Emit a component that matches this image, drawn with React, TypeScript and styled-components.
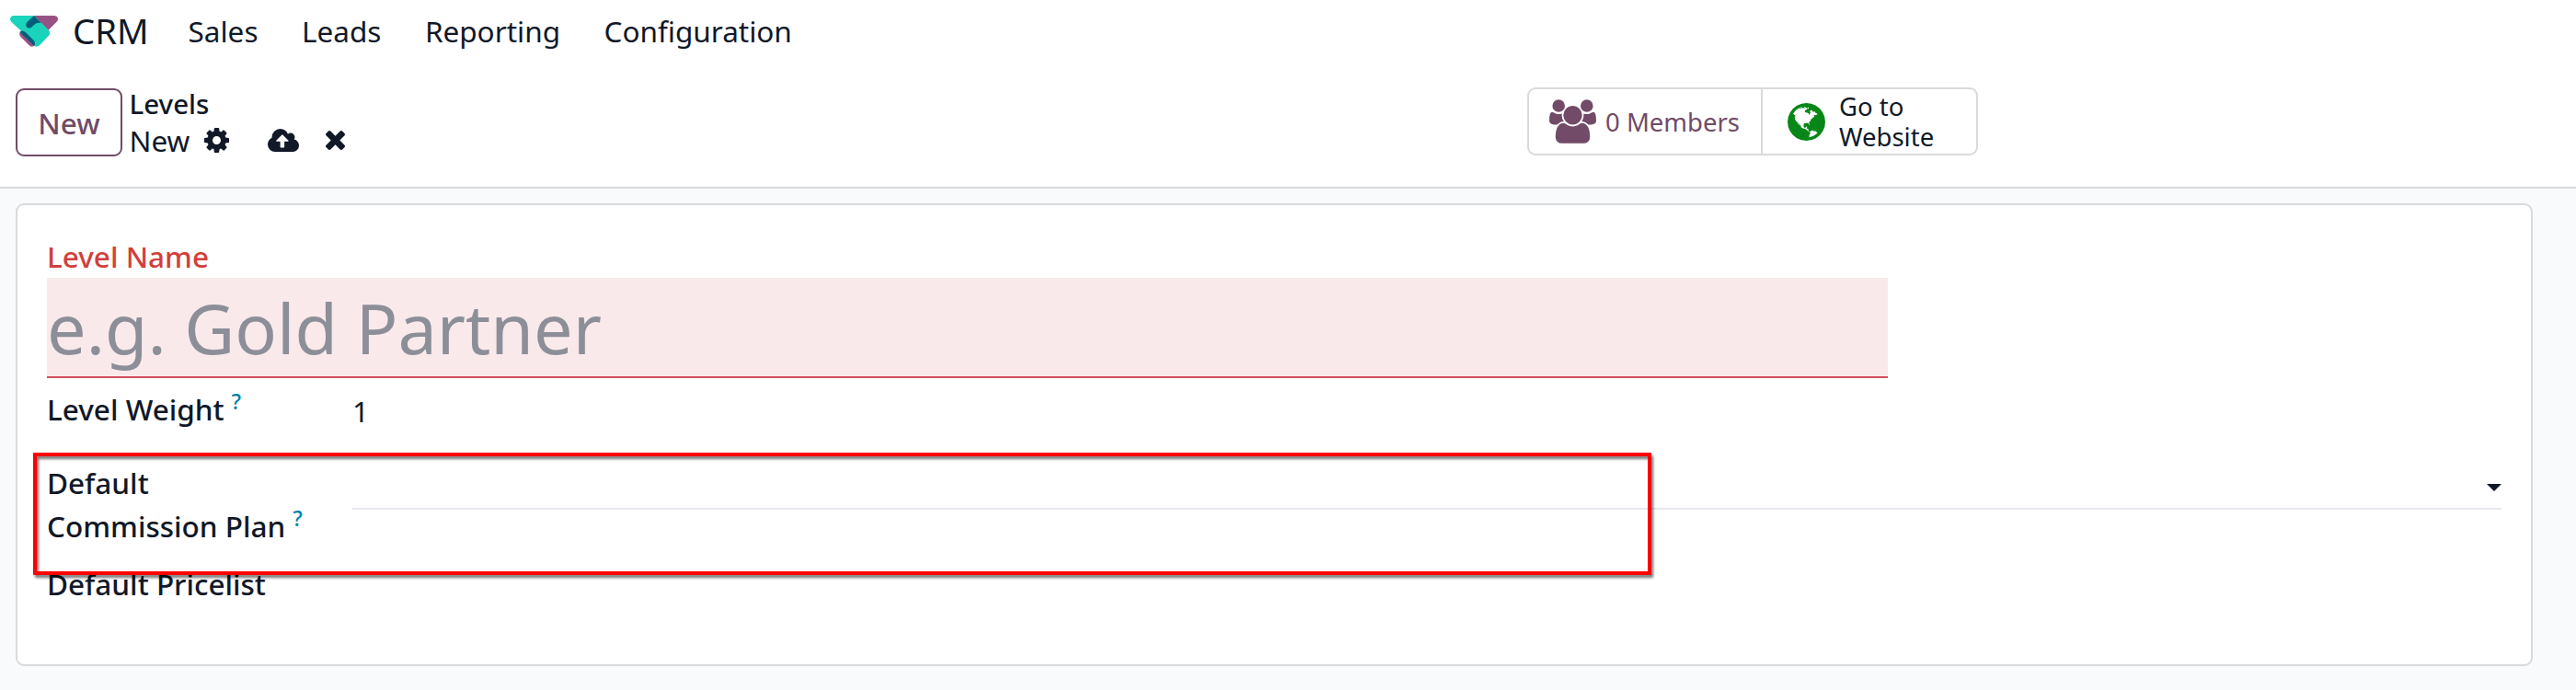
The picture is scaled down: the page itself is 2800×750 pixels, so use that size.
import React from "react";
import styled, { createGlobalStyle } from "styled-components";

const ink = "#111827";
const plum = "#714b67";
const line = "#d8dadd";

const GlobalStyle = createGlobalStyle`
  * { box-sizing: border-box; }
  body {
    margin: 0;
    background: #f9fafc;
    color: ${ink};
    font-family: "Noto Sans", "Liberation Sans", sans-serif;
    font-size: 31.5px;
    line-height: 47px;
  }
`;

const Page = styled.div`
  display: flex;
  flex-direction: column;
  height: 750px;
  overflow: hidden;
`;

const Header = styled.header`
  height: 205px;
  background: #fff;
  border-bottom: 2px solid ${line};
`;

const Navbar = styled.nav`
  display: flex;
  align-items: center;
  height: 67px;
  padding-left: 11px;
`;

const Brand = styled.span`
  margin: 0 43px 0 16px;
  font-size: 38.2px;
  white-space: nowrap;
`;

const MenuItem = styled.a`
  margin-right: 47.5px;
  white-space: nowrap;
`;

const ControlPanel = styled.div`
  display: flex;
  align-items: flex-start;
  padding: 28px 0 0 17px;
`;

const NewButton = styled.button`
  width: 116px;
  height: 74px;
  margin-top: 1px;
  padding: 1px 0 0;
  border: 2px solid ${plum};
  border-radius: 9px;
  background: #fff;
  color: ${plum};
  font: inherit;
  font-weight: 500;
`;

const Breadcrumb = styled.div`
  display: flex;
  flex-direction: column;
  width: 1517px;
  margin-top: -2px;
  padding: 0 0 0 7.5px;
  line-height: 39.5px;
`;

const ParentCrumb = styled.a`
  font-weight: 500;
  font-size: 29.5px;
`;

const CurrentCrumb = styled.div`
  display: flex;
  align-items: center;
  font-size: 31.5px;
`;

const Icon = styled.svg<{ $w: number; $h: number; $ml?: number; $color?: string }>`
  flex: none;
  width: ${(p) => p.$w}px;
  height: ${(p) => p.$h}px;
  margin-left: ${(p) => p.$ml ?? 0}px;
  fill: ${(p) => p.$color ?? ink};
`;

const StatGroup = styled.div`
  display: flex;
  width: 490px;
  height: 74px;
  margin-left: 10px;
  border: 2px solid ${line};
  border-radius: 9px;
  font-size: 27.5px;
  line-height: 33px;
`;

const StatButton = styled.div<{ $width?: number; $pad: number; $color: string }>`
  display: flex;
  align-items: center;
  width: ${(p) => (p.$width ? `${p.$width}px` : "auto")};
  padding-left: ${(p) => p.$pad}px;
  color: ${(p) => p.$color};
  & + & { border-left: 2px solid ${line}; }
`;

const StatText = styled.span<{ $ml: number }>`
  margin-left: ${(p) => p.$ml}px;
  white-space: nowrap;
`;

const Sheet = styled.main`
  position: relative;
  width: 2736px;
  height: 503px;
  margin: 16px 0 0 17px;
  padding: 32px 32px 0;
  border: 2px solid ${line};
  border-radius: 9px;
  background: #fff;
`;

const Label = styled.label<{ $invalid?: boolean }>`
  display: block;
  font-weight: 500;
  white-space: nowrap;
  color: ${(p) => (p.$invalid ? "#d23f3a" : ink)};
`;

const NameInput = styled.input`
  display: block;
  width: 2001px;
  height: 109px;
  padding: 0;
  border: 0;
  border-bottom: 2px solid #d44c59;
  background: #fae9eb;
  font: inherit;
  font-size: 75.6px;
  &::placeholder { color: #8c8f98; opacity: 1; }
`;

const FieldRow = styled.div<{ $top: number; $height: number }>`
  display: grid;
  grid-template-columns: 332px 1fr;
  height: ${(p) => p.$height}px;
  margin-top: ${(p) => p.$top}px;
`;

const Help = styled.sup`
  margin-left: 8px;
  color: #0180a5;
  font-size: 23.5px;
  font-weight: 500;
  line-height: 0;
  vertical-align: 12px;
`;

const Value = styled.span`
  padding-top: 2px;
`;

const SelectField = styled.div`
  display: flex;
  align-items: center;
  justify-content: flex-end;
  height: 51px;
  margin-top: 2px;
  padding-top: 5px;
  border-bottom: 2px solid #e6e7ee;
`;

const Highlight = styled.div`
  position: absolute;
  left: 17px;
  top: 269px;
  width: 1759px;
  height: 133px;
  border: 4px solid #f00;
  border-radius: 1px;
  filter: drop-shadow(2px 3px 1.5px rgba(0, 0, 0, 0.55));
  pointer-events: none;
`;

const paths = {
  cog: "M1152 896q0-106-75-181t-181-75-181 75-75 181 75 181 181 75 181-75 75-181zm512-109v222q0 12-8 23t-20 13l-185 28q-19 54-39 91 35 50 107 138 10 12 10 25t-9 23q-27 37-99 108t-94 71q-12 0-26-9l-138-108q-44 23-91 38-16 136-29 186-7 28-36 28h-222q-14 0-24.5-8.5t-11.5-21.5l-28-184q-49-16-90-37l-141 107q-10 9-25 9-14 0-25-11-126-114-165-168-7-10-7-23 0-12 8-23 15-21 51-66.5t54-70.5q-27-50-41-99l-183-27q-13-2-21-12.5t-8-23.5v-222q0-12 8-23t19-13l186-28q14-46 39-92-40-57-107-138-10-12-10-24 0-10 9-23 26-36 98.5-107.5t94.5-71.5q13 0 26 10l138 107q44-23 91-38 16-136 29-186 7-28 36-28h222q14 0 24.5 8.5t11.5 21.5l28 184q49 16 90 37l142-107q9-9 24-9 13 0 25 10 129 119 165 170 7 8 7 22 0 12-8 23-15 21-51 66.5t-54 70.5q26 50 41 98l183 28q13 2 21 12.5t8 23.5z",
  cloud: "M1216 864q0-14-9-23l-352-352q-9-9-23-9t-23 9l-351 351q-10 12-10 24 0 14 9 23t23 9h224v352q0 13 9.5 22.5t22.5 9.5h192q13 0 22.5-9.5t9.5-22.5v-352h224q13 0 22.5-9.5t9.5-22.5zm640 288q0 159-112.5 271.5t-271.5 112.5h-1088q-185 0-316.5-131.5t-131.5-316.5q0-130 70-240t188-165q-2-30-2-43 0-212 150-362t362-150q156 0 285.5 87t188.5 231q71-62 166-62 106 0 181 75t75 181q0 76-41 138 130 31 213.5 135.5t83.5 238.5z",
  times: "M1490 1322q0 40-28 68l-136 136q-28 28-68 28t-68-28l-294-294-294 294q-28 28-68 28t-68-28l-136-136q-28-28-28-68t28-68l294-294-294-294q-28-28-28-68t28-68l136-136q28-28 68-28t68 28l294 294 294-294q28-28 68-28t68 28l136 136q28 28 28 68t-28 68l-294 294 294 294q28 28 28 68z",
  users: "M529 896q-162 5-265 128h-134q-82 0-138-40.5t-56-118.5q0-353 124-353 6 0 43.5 21t97.5 42.5 119 21.5q67 0 133-23-5 37-5 66 0 139 81 256zm1071 637q0 120-73 189.5t-194 69.5h-874q-121 0-194-69.5t-73-189.5q0-53 3.5-103.5t14-109 26.5-108.5 43-97.5 62-81 85.5-53.5 111.5-20q10 0 43 21.5t73 48 107 48 135 21.5 135-21.5 107-48 73-48 43-21.5q61 0 111.5 20t85.5 53.5 62 81 43 97.5 26.5 108.5 14 109 3.5 103.5zm-1024-1277q0 106-75 181t-181 75-181-75-75-181 75-181 181-75 181 75 75 181zm704 384q0 159-112.5 271.5t-271.5 112.5-271.5-112.5-112.5-271.5 112.5-271.5 271.5-112.5 271.5 112.5 112.5 271.5zm576 225q0 78-56 118.5t-138 40.5h-134q-103-123-265-128 81-117 81-256 0-29-5-66 66 23 133 23 59 0 119-21.5t97.5-42.5 43.5-21q124 0 124 353zm-128-609q0 106-75 181t-181 75-181-75-75-181 75-181 181-75 181 75 75 181z",
  globe: "M896 128q209 0 385.5 103t279.5 279.5 103 385.5-103 385.5-279.5 279.5-385.5 103-385.5-103-279.5-279.5-103-385.5 103-385.5 279.5-279.5 385.5-103zm274 521q-2 1-9.5 9.5t-13.5 9.5q2 0 4.5-5t5-11 3.5-7q6-7 22-15 14-6 52-12 34-8 51 11-2-2 9.5-13t14.5-12q3-2 15-4.5t15-7.5l2-22q-12 1-17.5-7t-6.5-21q0 2-6 8 0-7-4.5-8t-11.5 1-9 1q-10-3-15-7.5t-8-16.5-4-15q-2-5-9.5-11t-9.5-10q-1-2-2.5-5.5t-3-6.5-4-5.5-5.5-2.5-7 5-7.5 10-4.5 5q-3-2-6-1.5t-4.5 1-4.5 3-5 3.5q-3 2-8.5 3t-8.5 2q15-5-1-11-10-4-16-3 9-4 7.5-12t-8.5-14h5q-1-4-8.5-8.5t-17.5-8.5-13-6q-8-5-34-9.5t-33-.5q-5 6-4.5 10.5t4 14 3.5 12.5q1 6-5.5 13t-6.5 12q0 7 14 15.5t10 21.5q-3 8-16 16t-16 12q-5 8-1.5 18.5t10.5 16.5q2 2 1.5 4t-3.5 4.5-5.5 4-6.5 3.5l-3 2q-11 5-20.5-6t-13.5-26q-7-25-16-30-23-8-29 1-5-13-41-26-25-9-58-4 6-1 0-15-7-15-19-12 3-6 4-17.5t1-13.5q3-13 12-23 1-1 7-8.5t9.5-13.5.5-6q35 4 50-11 5-5 11.5-17t10.5-17q9-6 14-5.5t14.5 5.5 14.5 5q14 1 15.5-11t-7.5-20q12 1 3-17-4-7-8-9-12-4-27 5-8 4 2 8-1-1-9.5 10.5t-16.5 17.5-16-5q-1-1-5.5-13.5t-9.5-13.5q-8 0-16 15 3-8-11-15t-24-8q19-12-8-27-7-4-20.5-5t-19.5 4q-5 7-5.5 11.5t5 8 10.5 5.5 11.5 4 8.5 3q14 10 8 14-2 1-8.5 3.5t-11.5 4.5-6 4q-3 4 0 14t-2 14q-5-5-9-17.5t-7-16.5q7 9-25 6l-10-1q-4 0-16 2t-20.5 1-13.5-8q-4-8 0-20 1-4 4-2-4-3-11-9.5t-10-8.5q-46 15-94 41 6 1 12-1 5-2 13-6.5t10-5.5q34-14 42-7l5-5q14 16 20 25-7-4-30-1-20 6-22 12 7 12 5 18-4-3-11.5-10t-14.5-11-15-5q-16 0-22 1-146 80-235 222 7 7 12 8 4 1 5 9t2.5 11 11.5-3q9 8 3 19 1-1 44 27 19 17 21 21 3 11-10 18-1-2-9-9t-9-4q-3 5 .5 18.5t10.5 12.5q-7 0-9.5 16t-2.5 35.5-1 23.5l2 1q-3 12 5.5 34.5t21.5 19.5q-13 3 20 43 6 8 8 9 3 2 12 7.5t15 10 10 10.5q4 5 10 22.5t14 23.5q-2 6 9.5 20t10.5 23q-1 0-2.5 1t-2.5 1q3 7 15.5 14t15.5 13q1 3 2 10t3 11 8 2q2-20-24-62-15-25-17-29-3-5-5.5-15.5t-4.5-14.5q2 0 6 1.5t8.5 3.5 7.5 4 2 3q-3 7 2 17.5t12 18.5 17 19 12 13q6 6 14 19.5t0 13.5q9 0 20 10.5t17 19.5q5 8 8 26t5 24q2 7 8.5 13.5t12.5 9.5l16 8 13 7q5 2 18.5 10.5t21.5 11.5q10 4 16 4t14.5-2.5 13.5-3.5q15-2 29 15t21 21q36 19 55 11-2 1 .5 7.5t8 15.5 9 14.5 5.5 8.5q5 6 18 15t18 15q6-4 7-9-3 8 7 20t18 10q14-3 14-32-31 15-49-18 0-1-2.5-5.5t-4-8.5-2.5-8.5 0-7.5 5-3q9 0 10-3.5t-2-12.5-4-13q-1-8-11-20t-12-15q-5 9-16 8t-16-9q0 1-1.5 5.5t-1.5 6.5q-13 0-15-1 1-3 2.5-17.5t3.5-22.5q1-4 5.5-12t7.5-14.5 4-12.5-4.5-9.5-17.5-2.5q-19 1-26 20-1 3-3 10.5t-5 11.5-9 7q-7 3-24 2t-24-5q-13-8-22.5-29t-9.5-37q0-10 2.5-26.5t3-25-5.5-24.5q3-2 9-9.5t10-10.5q2-1 4.5-1.5t4.5 0 4-1.5 3-6q-1-1-4-3-3-3-4-3 7 3 28.5-1.5t27.5 1.5q15 11 22-2 0-1-2.5-9.5t-.5-13.5q5 27 29 9 3 3 15.5 5t17.5 5q3 2 7 5.5t5.5 4.5 5-.5 8.5-6.5q10 14 12 24 11 40 19 44 7 3 11 2t4.5-9.5 0-14-1.5-12.5l-1-8v-18l-1-8q-15-3-18.5-12t1.5-18.5 15-18.5q1-1 8-3.5t15.5-6.5 12.5-8q21-19 15-35 7 0 11-9-1 0-5-3t-7.5-5-4.5-2q9-5 2-16 5-3 7.5-11t7.5-10q9 12 21 2 7-8 1-16 5-7 20.5-10.5t18.5-9.5q7 2 8-2t1-12 3-12q4-5 15-9t13-5l17-11q3-4 0-4 18 2 31-11 10-11-6-20 3-6-3-9.5t-15-5.5q3-1 11.5-.5t10.5-1.5q15-10-7-16-17-5-43 12zm-163 877q206-36 351-189-3-3-12.5-4.5t-12.5-3.5q-18-7-24-8 1-7-2.5-13t-8-9-12.5-8-11-7q-2-2-7-6t-7-5.5-7.5-4.5-8.5-2-10 1l-3 1q-3 1-5.5 2.5t-5.5 3-4 3 0 2.5q-21-17-36-22-5-1-11-5.5t-10.5-7-10-1.5-11.5 7q-5 5-6 15t-2 13q-7-5 0-17.5t2-18.5q-3-6-10.5-4.5t-12 4.5-11.5 8.5-9 6.5-8.5 5.5-8.5 7.5q-3 4-6 12t-5 11q-2-4-11.5-6.5t-9.5-5.5q2 10 4 35t5 38q7 31-12 48-27 25-29 40-4 22 12 26 0 7-8 20.5t-7 21.5q0 6 2 16z",
};

const Logo = () => (
  <Icon $w={52} $h={34} viewBox="0 0 156 102" aria-hidden="true">
    <path fill="#985184" d="M78 0H144Q153 0 156 8Q157 16 151 21L124 48Z" />
    <path fill="#1ad3bb" d="M12 0H78L100 22L126 48Q133 56 126 65L96 97Q88 104 80 99L82 88L36 50L4 20Q-2 14 1 7Q4 0 12 0Z" />
    <path fill="#005e7a" d="M78 0L56 20Q48 29 54 37Q62 45 71 37L79 29Q88 22 98 24L101 23Z" />
    <path fill="#985184" d="M32 54Q28 62 35 70L62 97Q69 104 78 99L81 93L36 52Z" />
    <path fill="#005e7a" d="M33 52Q41 46 50 54L78 82Q84 90 79 99L36 58Q32 55 33 52Z" />
  </Icon>
);

export default function App() {
  return (
    <Page>
      <GlobalStyle />
      <Header>
        <Navbar>
          <Logo />
          <Brand>CRM</Brand>
          {["Sales", "Leads", "Reporting", "Configuration"].map((item) => (
            <MenuItem key={item}>{item}</MenuItem>
          ))}
        </Navbar>
        <ControlPanel>
          <NewButton>New</NewButton>
          <Breadcrumb>
            <ParentCrumb>Levels</ParentCrumb>
            <CurrentCrumb>
              New
              <Icon $w={27} $h={27} $ml={16} viewBox="128 128 1536 1536"><path d={paths.cog} /></Icon>
              <Icon $w={34} $h={25} $ml={42} viewBox="-64 128 1920 1408"><path d={paths.cloud} /></Icon>
              <Icon $w={21} $h={21} $ml={29} viewBox="302 366 1188 1188"><path d={paths.times} /></Icon>
            </CurrentCrumb>
          </Breadcrumb>
          <StatGroup>
            <StatButton $width={252} $pad={22} $color={plum}>
              <Icon $w={51} $h={48} $color={plum} viewBox="-64 0 1920 1792"><path d={paths.users} /></Icon>
              <StatText $ml={10}>0 Members</StatText>
            </StatButton>
            <StatButton $pad={27} $color={ink}>
              <Icon $w={41} $h={41} $color="#078717" viewBox="128 128 1536 1536"><path d={paths.globe} /></Icon>
              <StatText $ml={15}>Go to<br />Website</StatText>
            </StatButton>
          </StatGroup>
        </ControlPanel>
      </Header>
      <Sheet>
        <Label $invalid>Level Name</Label>
        <NameInput placeholder="e.g. Gold Partner" />
        <FieldRow $top={10} $height={47}>
          <Label>Level Weight<Help>?</Help></Label>
          <Value>1</Value>
        </FieldRow>
        <FieldRow $top={33} $height={94}>
          <Label>Default<br />Commission Plan<Help>?</Help></Label>
          <SelectField>
            <Icon $w={16} $h={8} viewBox="0 0 16 8"><path d="M0 0H16L8 8Z" /></Icon>
          </SelectField>
        </FieldRow>
        <FieldRow $top={16} $height={47}>
          <Label>Default Pricelist</Label>
        </FieldRow>
        <Highlight />
      </Sheet>
    </Page>
  );
}
